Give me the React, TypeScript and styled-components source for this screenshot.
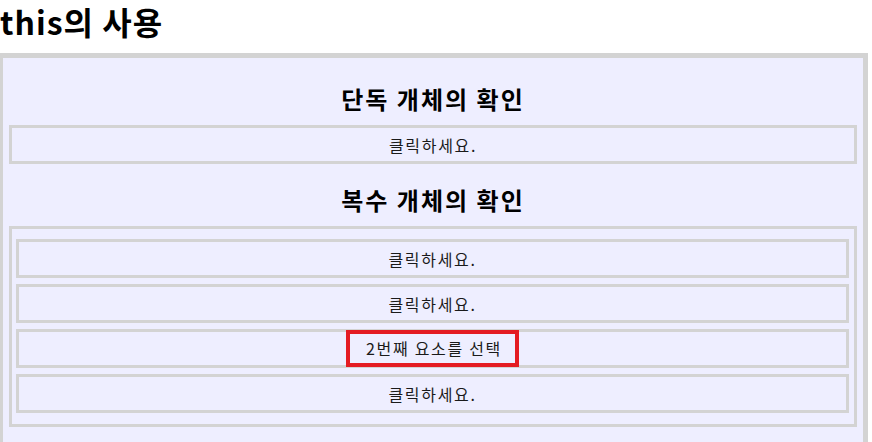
import styled, { createGlobalStyle } from "styled-components"

const GlobalStyle = createGlobalStyle`
    body {
        margin: 0;
        background: #fff;
        font-family: "Noto Sans CJK KR", "Noto Sans", sans-serif;
        color: #000;
        overflow: hidden;
    }
`

const Title = styled.h1`
    margin: 0 0 10px;
    font-size: 32px;
    font-weight: 700;
    line-height: 43px;
    letter-spacing: 1px;
`

const Section = styled.div`
    box-sizing: border-box;
    width: 870px;
    height: 400px;
    margin-left: -2px;
    padding: 0 6px 10px;
    background: #eeeeff;
    border: 5px solid #d3d3d3;
`

const Heading = styled.h2<{ $top: number }>`
    margin: ${(p) => p.$top}px 0 10px;
    font-size: 24px;
    font-weight: 700;
    line-height: 32px;
    letter-spacing: 2px;
    text-align: center;
`

const Box = styled.div`
    box-sizing: border-box;
    height: 39px;
    border: 3px solid #d3d3d3;
    display: flex;
    align-items: center;
    justify-content: center;
    font-size: 16px;
    letter-spacing: 1.7px;
    color: #1a1a1a;
`

const ItemList = styled.div`
    border: 3px solid #d3d3d3;
    padding: 10px 5px 10.6px 4px;
    display: flex;
    flex-direction: column;
    gap: 5.6px;
`

const Item = styled(Box)`
    height: 39.4px;
`

const Picked = styled.span`
    display: inline-block;
    line-height: 21px;
    padding: 4px 13px 4px 16px;
    border: 4px solid #e41b22;
`

const items = ["클릭하세요.", "클릭하세요.", "2번째 요소를 선택", "클릭하세요."]

const App: React.FC = () => {
    return (
        <>
            <GlobalStyle />
            <Title>this의 사용</Title>
            <Section>
                <Heading $top={25}>단독 개체의 확인</Heading>
                <Box>클릭하세요.</Box>

                <Heading $top={20}>복수 개체의 확인</Heading>
                <ItemList>
                    {items.map((text, i) => (
                        <Item key={i}>
                            {i === 2 ? <Picked>{text}</Picked> : text}
                        </Item>
                    ))}
                </ItemList>
            </Section>
        </>
    )
}

export default App
